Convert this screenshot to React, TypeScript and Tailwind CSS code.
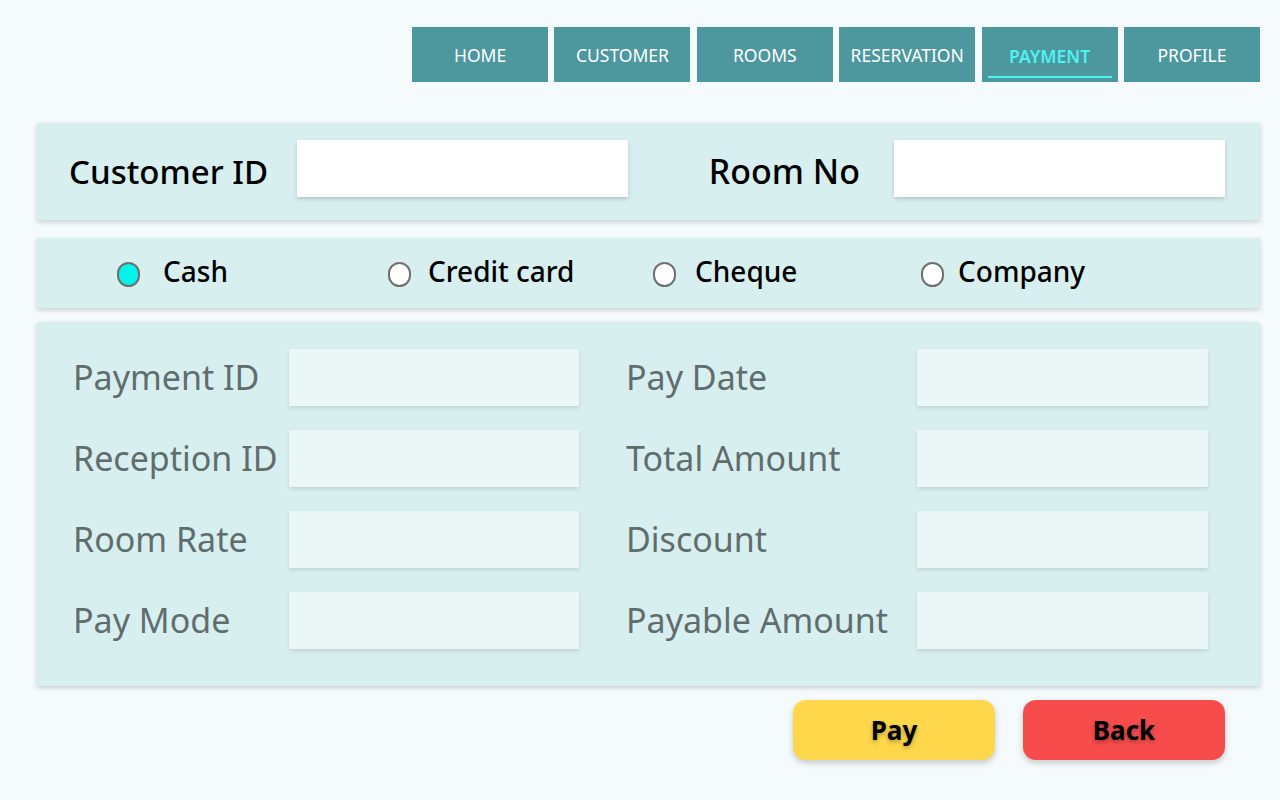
import React from "react";

const NAV = ["HOME", "CUSTOMER", "ROOMS", "RESERVATION", "PAYMENT", "PROFILE"];

const MODES = [
  { label: "Cash", checked: true, item: "w-[271px] gap-[23px]" },
  { label: "Credit card", checked: false, item: "w-[265px] gap-[17px]" },
  { label: "Cheque", checked: false, item: "w-[268px] gap-[19px]" },
  { label: "Company", checked: false, item: "gap-[14px]" },
];

const ROWS = [
  ["Payment ID", "Pay Date"],
  ["Reception ID", "Total Amount"],
  ["Room Rate", "Discount"],
  ["Pay Mode", "Payable Amount"],
];

const FONT = "font-['Noto_Sans','Open_Sans',sans-serif]";

export default function App() {
  return (
    <div className={`min-h-screen w-full bg-[#f5fbfd] ${FONT}`}>
      {/* Top navigation */}
      <nav className="flex justify-end gap-[6.4px] pt-[27px] pr-[20px]">
        {NAV.map((item) => {
          const active = item === "PAYMENT";
          return (
            <button
              key={item}
              className="relative flex h-[55px] w-[136px] items-center justify-center bg-[#4d979e]"
            >
              <span
                className={
                  active
                    ? "mt-[4px] text-[17.5px] font-semibold text-[#4ff2f2]"
                    : "mt-[1px] text-[17.5px] text-white"
                }
              >
                {item}
              </span>
              {active && (
                <span className="absolute bottom-[4px] left-[6px] right-[6px] h-[2px] bg-[#4ff2f2]" />
              )}
            </button>
          );
        })}
      </nav>

      <div className="ml-[37px] mr-[20px] mt-[41px] flex flex-col">
        {/* Customer / room */}
        <section className="flex h-[97px] items-center bg-[#d8eff0] pl-[32px] pr-[35px] shadow-[0_2px_5px_rgba(0,0,0,0.18)]">
          <label className="w-[228px] text-[33px] font-medium text-black">Customer ID</label>
          <div className="mb-[6px] h-[57px] w-[331px] bg-white shadow-[0_2px_4px_rgba(0,0,0,0.18)]" />
          <div className="flex flex-1 items-center justify-end gap-[34px]">
            <label className="text-[34px] font-medium text-black">Room No</label>
            <div className="mb-[6px] h-[57px] w-[331px] bg-white shadow-[0_2px_4px_rgba(0,0,0,0.18)]" />
          </div>
        </section>

        {/* Payment mode */}
        <section className="mt-[18px] flex h-[70px] items-center bg-[#d8eff0] pl-[80px] shadow-[0_2px_5px_rgba(0,0,0,0.18)]">
          {MODES.map((m) => (
            <div key={m.label} className={`flex items-center ${m.item}`}>
              <span
                className={`mt-[2px] h-[25px] w-[23px] rounded-full border-[2.5px] border-[#6f6f6f] ${
                  m.checked ? "bg-[#00f5ea]" : "bg-white"
                }`}
              />
              <span className="-mt-[5px] text-[28px] font-medium text-black">{m.label}</span>
            </div>
          ))}
        </section>

        {/* Details */}
        <section className="mt-[14px] grid h-[364px] grid-cols-[553px_1fr] content-start gap-y-[24px] bg-[#d8eff0] pl-[36px] pt-[27px] shadow-[0_2px_5px_rgba(0,0,0,0.18)]">
          {ROWS.map(([left, right]) => (
            <React.Fragment key={left}>
              <div className="flex items-center">
                <label className="w-[216px] text-[34px] text-[#5f6e6d]">{left}</label>
                <div className="h-[57px] w-[290px] bg-[#ebf7f6] shadow-[0_2px_4px_rgba(0,0,0,0.12)]" />
              </div>
              <div className="flex items-center">
                <label className="w-[291px] text-[34px] text-[#5f6e6d]">{right}</label>
                <div className="h-[57px] w-[291px] bg-[#ebf7f6] shadow-[0_2px_4px_rgba(0,0,0,0.12)]" />
              </div>
            </React.Fragment>
          ))}
        </section>

        {/* Actions */}
        <div className="mt-[14px] flex justify-end gap-[28px] pr-[35px]">
          <button className="flex h-[60px] w-[202px] items-center justify-center rounded-[13px] bg-[#fed84a] text-[26px] font-bold text-black shadow-[0_3px_6px_rgba(0,0,0,0.2)] [text-shadow:0_2px_4px_rgba(0,0,0,0.3)]">
            Pay
          </button>
          <button className="flex h-[60px] w-[202px] items-center justify-center rounded-[13px] bg-[#f74c4c] text-[26px] font-bold text-black shadow-[0_3px_6px_rgba(0,0,0,0.2)] [text-shadow:0_2px_4px_rgba(0,0,0,0.3)]">
            Back
          </button>
        </div>
      </div>
    </div>
  );
}
